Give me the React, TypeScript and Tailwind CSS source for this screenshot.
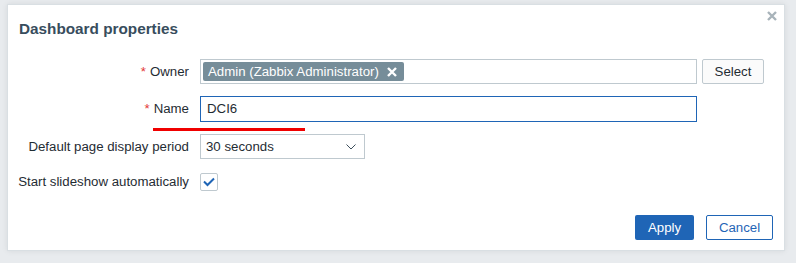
import React from 'react';

const Label = ({ text, required }: { text: string; required?: boolean }) => (
  <div className="flex items-center justify-end text-[13.25px] text-[#1f2c33] pr-[11px] whitespace-nowrap">
    {required && <span className="text-[#e33734] mr-[4px]">*</span>}
    {text}
  </div>
);

export default function App() {
  return (
    <div className="w-[796px] h-[263px] bg-[#e8ebee] pt-[4px] pl-[7px] font-['Liberation_Sans',Arial,sans-serif]">
      <div className="relative w-[778px] h-[247px] bg-white border border-[#d9dfe3] shadow-[0_0_6px_rgba(0,0,0,0.08)]">
        <div className="flex items-start justify-between h-[46px] pl-[11px] pr-[6px]">
          <h2 className="pt-[13px] text-[15.3px] font-bold text-[#384d5d]">Dashboard properties</h2>
          <button className="mt-[5px] text-[#a8b3ba]">
            <svg width="12" height="12" viewBox="0 0 12 12">
              <path d="M2 2 L10 10 M10 2 L2 10" stroke="currentColor" strokeWidth="2.4" />
            </svg>
          </button>
        </div>

        <div className="grid grid-cols-[192px_1fr] gap-y-[12px] pt-[8px]">
          <Label text="Owner" required />
          <div className="flex gap-[5px]">
            <div className="w-[497px] h-[25px] border border-[#bfc9cf] flex items-center pl-[2px]">
              <span className="flex items-center h-[19px] bg-[#768d99] text-white text-[13.25px] pl-[5px] pr-[7px] rounded-[2px]">
                Admin (Zabbix Administrator)
                <svg className="ml-[8px]" width="10" height="10" viewBox="0 0 10 10">
                  <path d="M1 1 L9 9 M9 1 L1 9" stroke="white" strokeWidth="2.4" />
                </svg>
              </span>
            </div>
            <button className="w-[62px] h-[25px] border border-[#bfc9cf] rounded-[2px] bg-[#fbfbfb] text-[13.25px] text-[#1f2c33]">
              Select
            </button>
          </div>

          <Label text="Name" required />
          <div className="w-[497px] h-[26px] border border-[#1f65b6] flex items-center pl-[6px] text-[13.25px] text-[#1f2c33]">
            DCI6
          </div>

          <Label text="Default page display period" />
          <div className="w-[165px] h-[25px] border border-[#bfc9cf] flex items-center justify-between pl-[5px] pr-[8px] text-[13.25px] text-[#1f2c33]">
            30 seconds
            <svg width="10" height="6" viewBox="0 0 10 6">
              <path d="M0.5 0.5 L5 5 L9.5 0.5" stroke="#3d4f5c" strokeWidth="1" fill="none" />
            </svg>
          </div>

          <div className="h-[22px] flex items-center">
            <div className="w-full">
              <Label text="Start slideshow automatically" />
            </div>
          </div>
          <div className="h-[22px] flex items-center">
            <div className="w-[18px] h-[18px] border border-[#bfc9cf] rounded-[2px] flex items-center justify-center">
              <svg width="12" height="10" viewBox="0 0 12 10">
                <path d="M1 4.5 L4.5 8 L11 1.5" stroke="#1f65b6" strokeWidth="2" fill="none" />
              </svg>
            </div>
          </div>
        </div>

        <div className="flex justify-end gap-[12px] pr-[11px] mt-[22px]">
          <button className="w-[59px] h-[25px] bg-[#1f65b6] text-white text-[13.25px] rounded-[2px]">Apply</button>
          <button className="w-[67px] h-[25px] border border-[#1f65b6] text-[#1f65b6] text-[13.25px] rounded-[2px] bg-white">
            Cancel
          </button>
        </div>

        <div className="absolute left-[145px] top-[123px] w-[152px] h-[3px] bg-[#f00000]" />
      </div>
    </div>
  );
}
